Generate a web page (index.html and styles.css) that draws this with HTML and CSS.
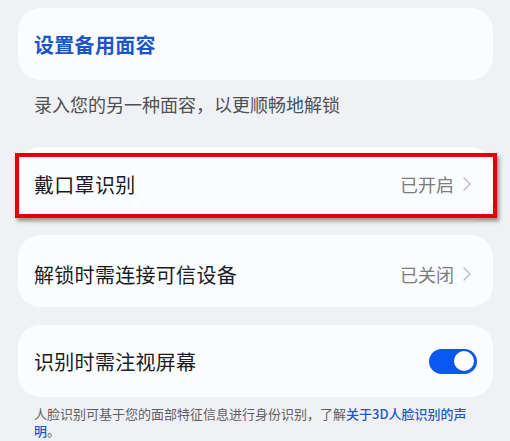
FILE: index.html
```html
<!DOCTYPE html>
<html lang="zh-CN">
<head>
<meta charset="utf-8">
<link rel="stylesheet" href="styles.css">
</head>
<body>
<div class="page">
  <div class="card card-first">
    <span class="title-link">设置备用面容</span>
  </div>
  <p class="caption">录入您的另一种面容，以更顺畅地解锁</p>

  <div class="card card-mask">
    <span class="label">戴口罩识别</span>
    <span class="value">已开启<svg class="chev" viewBox="0 0 8 14" width="8" height="14"><polyline points="1,1 7,7 1,13" fill="none" stroke="#b8b8bc" stroke-width="1.3" stroke-linecap="round" stroke-linejoin="round"/></svg></span>
    <div class="highlight"></div>
  </div>

  <div class="card card-device">
    <span class="label">解锁时需连接可信设备</span>
    <span class="value">已关闭<svg class="chev" viewBox="0 0 8 14" width="8" height="14"><polyline points="1,1 7,7 1,13" fill="none" stroke="#b8b8bc" stroke-width="1.3" stroke-linecap="round" stroke-linejoin="round"/></svg></span>
  </div>

  <div class="card card-gaze">
    <span class="label">识别时需注视屏幕</span>
    <span class="toggle"><span class="knob"></span></span>
  </div>

  <p class="footer"><span class="line1">人脸识别可基于您的面部特征信息进行身份识别，了解<span class="link">关于3D人脸识别的声</span></span><span class="line2"><span class="link">明</span>。</span></p>
</div>
</body>
</html>
```

FILE: styles.css
```css
html, body {
  margin: 0;
  padding: 0;
  background: #eff1f4;
  font-family: "Noto Sans CJK SC", "Noto Sans", sans-serif;
}

.page {
  width: 510px;
  height: 441px;
  overflow: hidden;
  padding: 8px 17px 0 18px;
  box-sizing: border-box;
}

.card {
  position: relative;
  background: #fbfcfe;
  border-radius: 22px;
  height: 72px;
  display: flex;
  align-items: center;
  justify-content: space-between;
  padding: 0 22px 0 16px;
  box-sizing: border-box;
}

.title-link {
  color: #1b56c9;
  font-size: 20px;
  font-weight: 700;
  letter-spacing: 0.3px;
}

.caption {
  margin: 0;
  padding: 12px 0 31px 16px;
  font-size: 18px;
  line-height: 24px;
  color: #4f5054;
}

.label {
  font-size: 20px;
  color: #1c1c1e;
  letter-spacing: 0.3px;
}

.value {
  display: flex;
  align-items: center;
  gap: 9px;
  font-size: 18px;
  color: #7b7c80;
}

.chev {
  display: block;
}

.card-mask {
  height: 74px;
}

.card-device {
  margin-top: 14px;
  padding-top: 6px;
}

.card-gaze {
  margin-top: 18px;
}

.highlight {
  position: absolute;
  top: 6px;
  left: -3px;
  right: -4px;
  bottom: 3px;
  border: 4px solid #e3000b;
  box-shadow: 2px 3px 4px rgba(60, 0, 0, 0.45);
}

.toggle {
  width: 48px;
  height: 25px;
  border-radius: 13px;
  background: #0b57f2;
  display: flex;
  align-items: center;
  justify-content: flex-end;
  padding: 0 3px;
  box-sizing: border-box;
  margin-right: -6px;
}

.knob {
  width: 20px;
  height: 20px;
  border-radius: 50%;
  background: #ffffff;
}

.footer {
  margin: 0;
  padding: 8px 0 0 16px;
  box-sizing: border-box;
  font-size: 13px;
  line-height: 17px;
  color: #5f6064;
}

.line1,
.line2 {
  display: block;
  white-space: nowrap;
}

.link {
  color: #1f58c6;
  font-weight: 500;
}
```
